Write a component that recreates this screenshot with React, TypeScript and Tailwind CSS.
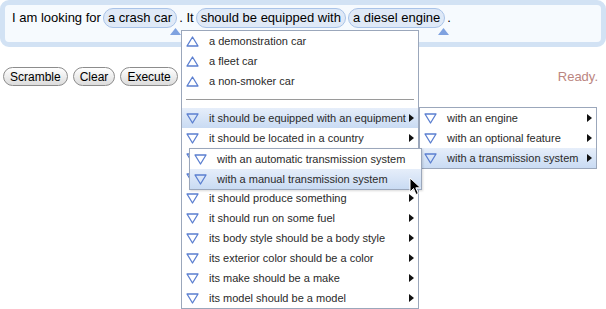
const font = { fontFamily: '"Liberation Sans", Arial, Helvetica, sans-serif' };

const Tri = ({ up }: { up?: boolean }) => (
  <svg width="13" height="11" viewBox="0 0 13 11" className="shrink-0">
    <polygon
      points={up ? '6.5,1 12,10 1,10' : '1,1 12,1 6.5,10'}
      fill="none"
      stroke="#5b7fd0"
      strokeWidth="1.3"
      strokeLinejoin="round"
    />
  </svg>
);

const Arrow = () => (
  <svg width="5" height="8" viewBox="0 0 5 8" className="shrink-0">
    <polygon points="0,0 5,4 0,8" fill="#111" />
  </svg>
);

type ItemProps = { label: string; up?: boolean; sub?: boolean; active?: boolean };

const Item = ({ label, up, sub, active }: ItemProps) => (
  <div
    className={`flex items-center h-[20px] pl-[4px] pr-[4px] ${
      active ? 'bg-gradient-to-b from-[#e6eefa] to-[#c9dbf3]' : ''
    }`}
  >
    <Tri up={up} />
    <span className="ml-[10px] flex-1 text-[11px] text-[#2a2a2a] whitespace-nowrap">{label}</span>
    {sub && <Arrow />}
  </div>
);

const Chip = ({ text, mark }: { text: string; mark?: boolean }) => (
  <span className="relative inline-flex items-center h-[20px] px-[4px] rounded-full border border-[#a9c3e8] bg-[#dfe9f7]">
    {text}
    {mark && (
      <svg width="11" height="7" viewBox="0 0 11 7" className="absolute right-[-5px] top-[19px]">
        <polygon points="5.5,0 11,7 0,7" fill="#7fa2e0" />
      </svg>
    )}
  </span>
);

const Button = ({ children }: { children: string }) => (
  <button className="h-[19px] px-[6px] rounded-full border border-[#8c8c8c] bg-gradient-to-b from-white to-[#dcdcdc] text-[12px] leading-none text-black">
    {children}
  </button>
);

export default function App() {
  // the two rows hidden behind the third-level menu are left without text
  const main: ItemProps[] = [
    { label: 'it should be equipped with an equipment', sub: true, active: true },
    { label: 'it should be located in a country', sub: true },
    { label: '', sub: true },
    { label: '', sub: true },
    { label: 'it should produce something', sub: true },
    { label: 'it should run on some fuel', sub: true },
    { label: 'its body style should be a body style', sub: true },
    { label: 'its exterior color should be a color', sub: true },
    { label: 'its make should be a make', sub: true },
    { label: 'its model should be a model', sub: true },
  ];

  return (
    <div className="relative w-[606px] h-[309px] overflow-hidden bg-white" style={font}>
      <div className="h-[47px] rounded-[9px] border-[5px] border-[#d2e2f4] bg-[#f6fafe] pl-[7px] pt-[3px]">
        <div className="flex items-center gap-[2px] text-[13px] text-black whitespace-nowrap">
          <span>I am looking for</span>
          <Chip text="a crash car" mark />
          <span>. It</span>
          <Chip text="should be equipped with" />
          <Chip text="a diesel engine" mark />
          <span>.</span>
        </div>
      </div>

      <div className="flex items-center mt-[20px] pl-[3px] pr-[8px]">
        <div className="flex gap-[5px]">
          <Button>Scramble</Button>
          <Button>Clear</Button>
          <Button>Execute</Button>
        </div>
        <span className="ml-auto text-[13px] text-[#bb8580]">Ready.</span>
      </div>

      {/* main menu */}
      <div className="absolute left-[181px] top-[30px] w-[238px] border border-[#9ba7bb] bg-white">
        <Item label="a demonstration car" up />
        <Item label="a fleet car" up />
        <Item label="a non-smoker car" up />
        <div className="h-[17px] flex items-center px-[4px]">
          <div className="h-px w-full bg-[#9a9a9a]" />
        </div>
        {main.map((m, i) => (
          <Item key={i} {...m} />
        ))}
      </div>

      {/* second level */}
      <div className="absolute left-[419px] top-[107px] w-[178px] border border-[#9ba7bb] bg-white">
        <Item label="with an engine" sub />
        <Item label="with an optional feature" sub />
        <Item label="with a transmission system" sub active />
      </div>

      {/* third level */}
      <div className="absolute left-[189px] top-[148px] w-[233px] border border-[#9ba7bb] bg-white shadow-[1px_1px_2px_rgba(0,0,0,0.15)]">
        <Item label="with an automatic transmission system" />
        <Item label="with a manual transmission system" active />
      </div>

      {/* mouse pointer */}
      <svg width="14" height="20" viewBox="0 0 14 20" className="absolute left-[409px] top-[177px]">
        <path d="M1 1 L1 15 L4.5 11.5 L7 17.5 L9.3 16.5 L6.8 10.8 L11.5 10.8 Z" fill="#000" stroke="#fff" strokeWidth="1" />
      </svg>
    </div>
  );
}
